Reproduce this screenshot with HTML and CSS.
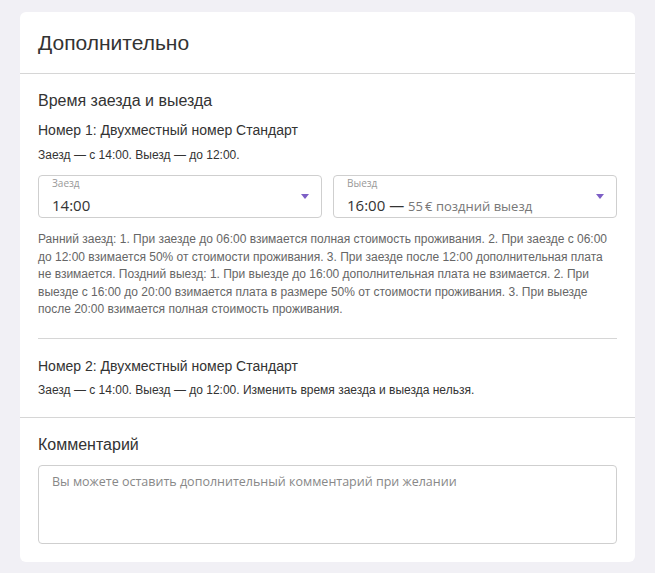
FILE: index.html
```html
<!DOCTYPE html>
<html lang="ru">
<head>
<meta charset="utf-8">
<link rel="stylesheet" href="styles.css">
</head>
<body>
<div class="card">
  <div class="card-header">Дополнительно</div>
  <div class="section">
    <div class="section-title">Время заезда и выезда</div>
    <div class="room">
      <div class="room-title">Номер 1: Двухместный номер Стандарт</div>
      <div class="room-note">Заезд — с 14:00. Выезд — до 12:00.</div>
      <div class="selects">
        <div class="select">
          <div class="select-label">Заезд</div>
          <div class="select-value">14:00</div>
          <span class="arrow"></span>
        </div>
        <div class="select">
          <div class="select-label">Выезд</div>
          <div class="select-value">16:00 — <span class="extra">55&thinsp;€ поздний выезд</span></div>
          <span class="arrow"></span>
        </div>
      </div>
      <p class="policy">Ранний заезд: 1. При заезде до 06:00 взимается полная стоимость проживания. 2. При заезде с 06:00 до 12:00 взимается 50% от стоимости проживания. 3. При заезде после 12:00 дополнительная плата не взимается. Поздний выезд: 1. При выезде до 16:00 дополнительная плата не взимается. 2. При выезде с 16:00 до 20:00 взимается плата в размере 50% от стоимости проживания. 3. При выезде после 20:00 взимается полная стоимость проживания.</p>
    </div>
    <div class="room room-2">
      <div class="room-title">Номер 2: Двухместный номер Стандарт</div>
      <div class="room-note">Заезд — с 14:00. Выезд — до 12:00. Изменить время заезда и выезда нельзя.</div>
    </div>
  </div>
  <div class="section comment">
    <div class="section-title">Комментарий</div>
    <div class="textarea">Вы можете оставить дополнительный комментарий при желании</div>
  </div>
</div>
</body>
</html>
```
FILE: styles.css
```css
html, body {
  margin: 0;
  background: #f1f0f5;
}
body {
  padding: 12px 20px 11px;
  font-family: "Liberation Sans", Arial, sans-serif;
  color: #333;
}
.card {
  background: #fff;
  border-radius: 6px;
}
.card-header {
  height: 61px;
  display: flex;
  align-items: center;
  padding: 0 18px;
  font-size: 21px;
  color: #333;
  border-bottom: 1px solid #d6d6d6;
}
.section {
  padding: 17px 18px 19px;
}
.section + .section {
  border-top: 1px solid #d6d6d6;
}
.section-title {
  font-size: 16px;
  line-height: 20px;
  color: #333;
}
.room {
  margin-top: 10px;
}
.room-title {
  font-size: 14px;
  line-height: 18px;
  color: #333;
}
.room-note {
  margin-top: 8px;
  font-size: 12px;
  line-height: 16px;
  color: #333;
}
.selects {
  margin-top: 12px;
  display: flex;
  gap: 11px;
}
.select {
  position: relative;
  flex: 1;
  height: 43px;
  box-sizing: border-box;
  border: 1px solid #cfcfcf;
  border-radius: 4px;
  padding: 0 13px;
  font-family: "Open Sans", sans-serif;
}
.select-label {
  font-size: 10px;
  line-height: 14px;
  color: #999;
}
.select-value {
  margin-top: 6px;
  font-size: 15px;
  line-height: 18px;
  color: #333;
}
.extra {
  font-size: 13px;
  color: #777;
}
.arrow {
  position: absolute;
  right: 12px;
  top: 18px;
  width: 0;
  height: 0;
  border-left: 4.5px solid transparent;
  border-right: 4.5px solid transparent;
  border-top: 5px solid #7d5fc6;
}
.policy {
  margin: 13px 0 0;
  font-size: 12px;
  line-height: 17.5px;
  color: #666;
}
.room-2 {
  margin-top: 19px;
  border-top: 1px solid #d6d6d6;
  padding-top: 18px;
}
.room-2 .room-note {
  margin-top: 7px;
}
.comment {
  padding-top: 17px;
  padding-bottom: 18px;
}
.textarea {
  margin-top: 10px;
  height: 79px;
  box-sizing: border-box;
  border: 1px solid #cfcfcf;
  border-radius: 4px;
  padding: 7px 13px;
  font-family: "Open Sans", sans-serif;
  font-size: 12.5px;
  line-height: 18px;
  color: #888;
}
```
